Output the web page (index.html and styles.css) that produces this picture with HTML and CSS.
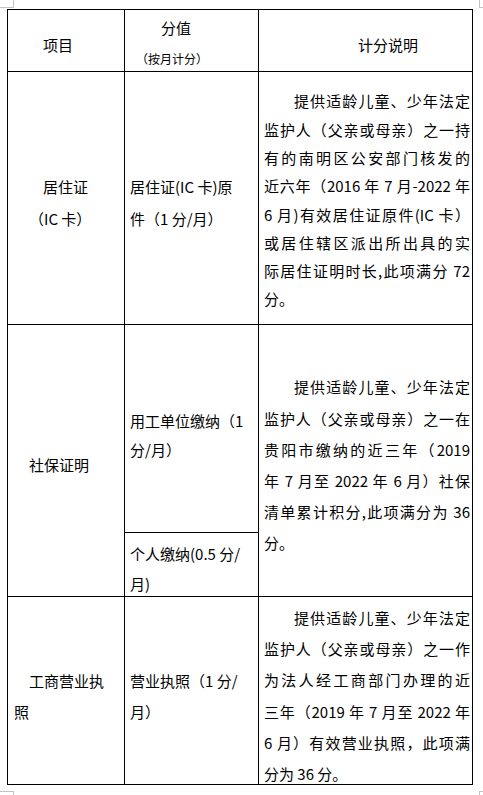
FILE: index.html
```html
<!DOCTYPE html>
<html lang="zh-CN">
<head>
<meta charset="utf-8">
<title>计分说明</title>
<link rel="stylesheet" href="styles.css">
</head>
<body>
<div class="page">
  <span class="mk mk-tl"></span>
  <span class="mk mk-tr"></span>
  <span class="mk mk-bl"></span>
  <span class="mk mk-br"></span>

  <div class="tbl">
    <div class="cell c1 hd p8"><span class="ln i2">项目</span></div>
    <div class="cell c2 hd top">
      <span class="ln h-main">分值</span>
      <span class="ln h-sub">（按月计分）</span>
    </div>
    <div class="cell c3 hd p8"><span class="ln h-right">计分说明</span></div>

    <div class="cell c1 p10 lh32">
      <span class="ln i2">居住证</span>
      <span class="ln i1">（IC 卡）</span>
    </div>
    <div class="cell c2 p10 lh32">
      <span class="ln">居住证(IC 卡)原</span>
      <span class="ln">件（1 分/月）</span>
    </div>
    <div class="cell c3 p5 lh28">
      <span class="ln jl ind">提供适龄儿童、少年法定</span>
      <span class="ln jl">监护人（父亲或母亲）之一持</span>
      <span class="ln jl">有的南明区公安部门核发的</span>
      <span class="ln jl">近六年（2016 年 7 月-2022 年</span>
      <span class="ln jl">6 月)有效居住证原件(IC 卡）</span>
      <span class="ln jl">或居住辖区派出所出具的实</span>
      <span class="ln jl">际居住证明时长,此项满分 72</span>
      <span class="ln">分。</span>
    </div>

    <div class="cell c1 span2 p8">
      <span class="ln i1">社保证明</span>
    </div>
    <div class="cell c2 p13 lh29">
      <span class="ln">用工单位缴纳（1</span>
      <span class="ln">分/月）</span>
    </div>
    <div class="cell c3 span2 p9 lh31">
      <span class="ln jl ind">提供适龄儿童、少年法定</span>
      <span class="ln jl">监护人（父亲或母亲）之一在</span>
      <span class="ln jl">贵阳市缴纳的近三年（2019</span>
      <span class="ln jl">年 7 月至 2022 年 6 月）社保</span>
      <span class="ln jl">清单累计积分,此项满分为 36</span>
      <span class="ln">分。</span>
    </div>
    <div class="cell c2 p9 lh30">
      <span class="ln">个人缴纳(0.5 分/</span>
      <span class="ln">月)</span>
    </div>

    <div class="cell c1 p11 lh315">
      <span class="ln i1">工商营业执</span>
      <span class="ln">照</span>
    </div>
    <div class="cell c2 p11 lh315">
      <span class="ln">营业执照（1 分/</span>
      <span class="ln">月）</span>
    </div>
    <div class="cell c3 p10 lh31">
      <span class="ln jl ind">提供适龄儿童、少年法定</span>
      <span class="ln jl">监护人（父亲或母亲）之一作</span>
      <span class="ln jl">为法人经工商部门办理的近</span>
      <span class="ln jl">三年（2019 年 7 月至 2022 年</span>
      <span class="ln jl">6 月）有效营业执照，此项满</span>
      <span class="ln">分为 36 分。</span>
    </div>
  </div>
</div>
</body>
</html>
```

FILE: styles.css
```css
html, body {
  margin: 0;
  padding: 0;
  background: #ffffff;
}

body {
  font-family: "Noto Sans CJK SC", "Noto Sans", sans-serif;
  font-size: 15px;
  color: #000000;
}

.page {
  position: relative;
  width: 483px;
  height: 795px;
  overflow: hidden;
}

/* page corner marks */
.mk {
  position: absolute;
  box-sizing: border-box;
  border: 0 solid #c3c3c3;
}
.mk-tl { left: 0; top: 0; width: 14px; height: 8px; border-right-width: 1px; border-bottom-width: 1px; }
.mk-tr { left: 479px; top: 0; width: 4px; height: 8px; border-left-width: 1px; border-bottom-width: 1px; }
.mk-bl { left: 0; top: 791px; width: 14px; height: 4px; border-right-width: 1px; border-top-width: 1px; }
.mk-br { left: 479px; top: 791px; width: 4px; height: 4px; border-left-width: 1px; border-top-width: 1px; }

/* table */
.tbl {
  display: grid;
  grid-template-columns: 117px 134px 214px;
  grid-template-rows: 62px 253px 208px 64px 188px;
  width: max-content;
  margin: 9px 0 0 7px;
  border-left: 1px solid #000;
  border-top: 1px solid #000;
}

.cell {
  box-sizing: border-box;
  border-right: 1px solid #000;
  border-bottom: 1px solid #000;
  display: flex;
  flex-direction: column;
  justify-content: center;
  min-width: 0;
  min-height: 0;
}

.span2 { grid-row: span 2; }

.c1 { padding-left: 6px; padding-right: 2px; }
.c2 { padding-left: 5px; padding-right: 2px; }
.c3 { padding-left: 5px; padding-right: 2px; }

.ln { display: block; white-space: nowrap; }
.jl {
  white-space: normal;
  text-align: justify;
  text-align-last: justify;
  text-justify: inter-character;
}
.ind { padding-left: 30px; }
.i1 { padding-left: 15px; }
.i2 { padding-left: 29px; }

/* vertical offsets */
.p5 { padding-top: 5px; }
.p8 { padding-top: 8px; }
.p9 { padding-top: 9px; }
.p10 { padding-top: 10px; }
.p11 { padding-top: 11px; }
.p13 { padding-top: 13px; }

/* line heights */
.hd { line-height: 28px; }
.lh28 { line-height: 28.3px; }
.lh29 { line-height: 29px; }
.lh30 { line-height: 30px; }
.lh31 { line-height: 31.2px; }
.lh315 { line-height: 31.5px; }
.lh32 { line-height: 32px; }

/* header */
.top { justify-content: flex-start; padding-top: 4px; }
.h-main { padding-left: 31px; line-height: 28px; }
.h-sub { padding-left: 6px; margin-top: 5px; font-size: 12px; line-height: 24px; }
.h-right { padding-left: 94px; }
```
